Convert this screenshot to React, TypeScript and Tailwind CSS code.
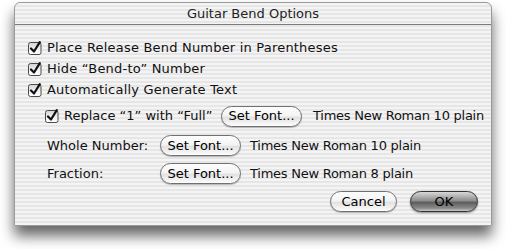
import React from "react";

const stripes =
  "bg-[repeating-linear-gradient(to_bottom,#f4f4f4_0px,#f4f4f4_2px,#e6e6e6_2px,#e6e6e6_4px)]";

function AquaCheck({ className = "" }: { className?: string }) {
  return (
    <svg width="14" height="14" viewBox="0 0 14 14" className={className}>
      <defs>
        <linearGradient id="cb" x1="0" y1="0" x2="0" y2="1">
          <stop offset="0" stopColor="#d2d2d2" />
          <stop offset="0.5" stopColor="#f0f0f0" />
          <stop offset="1" stopColor="#ffffff" />
        </linearGradient>
      </defs>
      <rect x="0.5" y="1.5" width="12.5" height="12" rx="2" fill="url(#cb)" stroke="#4a4a4a" />
      <path d="M3 7.5 L6 10.5 L11.8 1.2" fill="none" stroke="#111" strokeWidth="2.2" strokeLinecap="round" strokeLinejoin="round" />
    </svg>
  );
}

function PillButton({ children, className = "", dark = false }: { children: React.ReactNode; className?: string; dark?: boolean }) {
  return (
    <div
      className={`flex h-[21px] items-center justify-center rounded-full border text-[13px] ${
        dark
          ? "border-[#333] bg-[linear-gradient(to_bottom,#d8d8d8_0%,#8e8e8e_45%,#5e5e5e_55%,#8a8a8a_85%,#c8c8c8_100%)] text-black shadow-[0_1px_2px_rgba(0,0,0,0.45)]"
          : "border-[#707070] bg-[linear-gradient(to_bottom,#fdfdfd_0%,#f4f4f4_45%,#e2e2e2_55%,#f6f6f6_90%,#ffffff_100%)] text-black shadow-[0_1px_1px_rgba(0,0,0,0.25)]"
      } ${className}`}
    >
      {children}
    </div>
  );
}

function CheckRow({ label }: { label: string }) {
  return (
    <div className="flex h-[21px] items-center gap-[5px]">
      <AquaCheck />
      <span className="tracking-[0.2px]">{label}</span>
    </div>
  );
}

export default function App() {
  return (
    <div className="h-[249px] w-[506px] bg-white pl-[14px] pt-[2px]" style={{ fontFamily: '"DejaVu Sans", "Noto Sans", sans-serif' }}>
      <div className={`flex h-[224px] w-[478px] flex-col overflow-hidden rounded-t-[6px] border border-[#9a9a9a] ${stripes} text-[13px] text-[#111] shadow-[0_10px_14px_rgba(0,0,0,0.6)]`}>
        {/* title bar */}
        <div className="flex h-[22px] shrink-0 items-center justify-center border-b border-[#7c7c7c] text-[13px] text-[#222]">
          Guitar Bend Options
        </div>

        <div className="flex flex-col pl-[13px] pt-[12px]">
          <CheckRow label="Place Release Bend Number in Parentheses" />
          <CheckRow label="Hide “Bend-to” Number" />
          <CheckRow label="Automatically Generate Text" />

          <div className="mt-[5px] flex h-[22px] items-center pl-[17px]">
            <AquaCheck />
            <span className="ml-[5px] w-[157px]">Replace “1” with “Full”</span>
            <PillButton className="w-[81px]">Set Font...</PillButton>
            <span className="ml-[11px] tracking-[-0.25px]">Times New Roman 10 plain</span>
          </div>

          <div className="mt-[8px] flex h-[21px] items-center pl-[19px]">
            <span className="w-[113px]">Whole Number:</span>
            <PillButton className="w-[81px]">Set Font...</PillButton>
            <span className="ml-[9px] tracking-[-0.25px]">Times New Roman 10 plain</span>
          </div>

          <div className="mt-[7px] flex h-[21px] items-center pl-[19px]">
            <span className="w-[113px]">Fraction:</span>
            <PillButton className="w-[81px]">Set Font...</PillButton>
            <span className="ml-[9px] tracking-[-0.25px]">Times New Roman 8 plain</span>
          </div>

          <div className="mt-[7px] flex items-center justify-end gap-[13px] pr-[13px]">
            <PillButton className="w-[67px]">Cancel</PillButton>
            <PillButton dark className="w-[68px]">OK</PillButton>
          </div>
        </div>
      </div>
    </div>
  );
}
